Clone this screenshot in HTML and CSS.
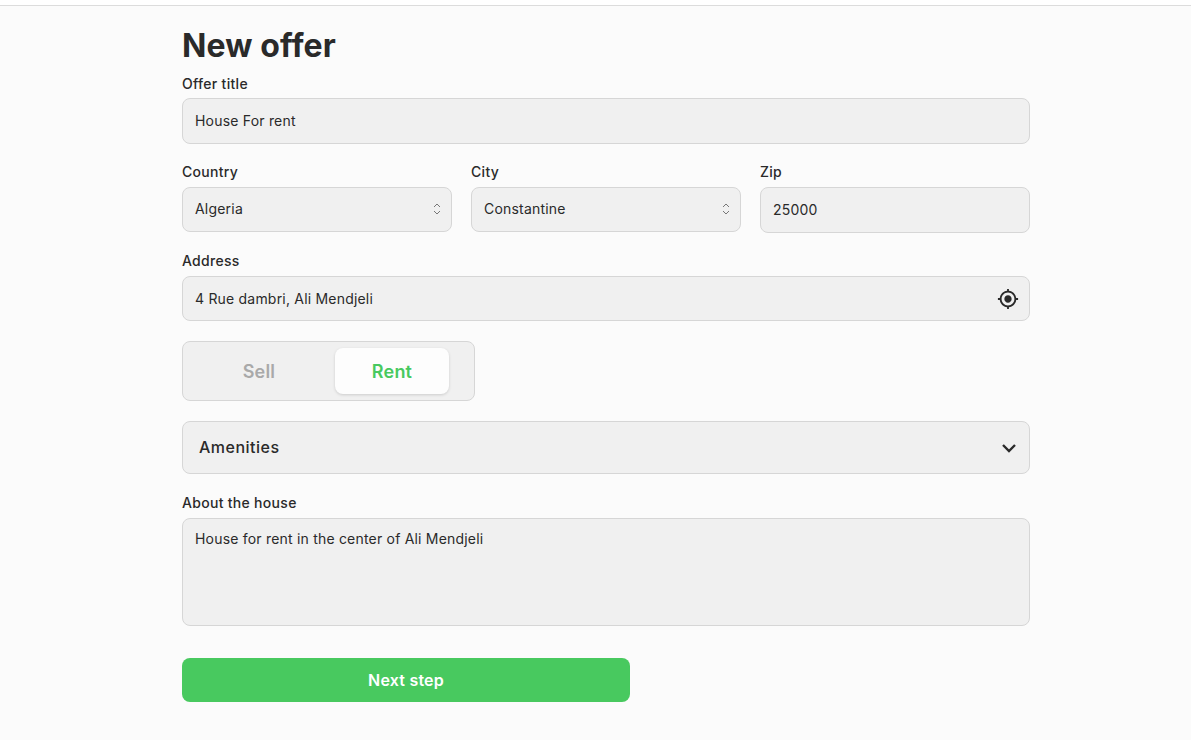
FILE: index.html
```html
<!DOCTYPE html>
<html lang="en">
<head>
    <meta charset="UTF-8">
    <meta name="viewport" content="width=device-width, initial-scale=1.0">
    <title>New offer</title>
    <link rel="stylesheet" href="styles.css">
</head>
<body>

    <div class="topbar"></div>

    <main class="page">
        <h1>New offer</h1>
        <form class="offer-form">
            <div class="field">
                <label for="title">Offer title</label>
                <input type="text" id="title" value="House For rent">
            </div>

            <div class="row">
                <div class="field">
                    <label for="country" class="raised">Country</label>
                    <div class="select-wrap">
                        <select id="country"><option>Algeria</option></select>
                        <svg class="updown" viewBox="0 0 8 12"><path d="M1 4l3-3 3 3M1 8l3 3 3-3"/></svg>
                    </div>
                </div>
                <div class="field">
                    <label for="city" class="raised">City</label>
                    <div class="select-wrap">
                        <select id="city"><option>Constantine</option></select>
                        <svg class="updown" viewBox="0 0 8 12"><path d="M1 4l3-3 3 3M1 8l3 3 3-3"/></svg>
                    </div>
                </div>
                <div class="field">
                    <label for="zip" class="raised">Zip</label>
                    <input type="text" id="zip" value="25000">
                </div>
            </div>

            <div class="field">
                <label for="address" class="raised">Address</label>
                <div class="select-wrap">
                    <input type="text" id="address" class="short" value="4 Rue dambri, Ali Mendjeli">
                    <svg class="locate" viewBox="0 0 24 24"><path d="M12 8c-2.21 0-4 1.79-4 4s1.79 4 4 4 4-1.79 4-4-1.79-4-4-4zm8.94 3c-.46-4.17-3.77-7.48-7.94-7.94V1h-2v2.06C6.83 3.52 3.52 6.83 3.06 11H1v2h2.06c.46 4.17 3.77 7.48 7.94 7.94V23h2v-2.06c4.17-.46 7.48-3.77 7.94-7.94H23v-2h-2.06zM12 19c-3.87 0-7-3.13-7-7s3.13-7 7-7 7 3.13 7 7-3.13 7-7 7z"/></svg>
                </div>
            </div>

            <div class="toggle">
                <button type="button" class="toggle-btn">Sell</button>
                <button type="button" class="toggle-btn active">Rent</button>
            </div>

            <div class="accordion">
                <span>Amenities</span>
                <svg class="chevron" viewBox="0 0 16 10"><path d="M2 2l6 6 6-6"/></svg>
            </div>

            <div class="field">
                <label for="about" class="about-label">About the house</label>
                <textarea id="about">House for rent in the center of Ali Mendjeli</textarea>
            </div>

            <button type="submit" class="next-btn">Next step</button>
        </form>
    </main>

</body>
</html>
```

FILE: styles.css
```css
body {
    margin: 0;
    background-color: #fbfbfb;
    color: #2a2a2a;
    font-family: Inter, "Open Sans", sans-serif;
}
.topbar {
    height: 5px;
    background-color: #fff;
    border-bottom: 1px solid #dcdcdc;
}
.page {
    width: 848px;
    margin-left: 182px;
}
h1 {
    margin: 0;
    padding-top: 16px;
    font-size: 32px;
    line-height: 48px;
    font-weight: 700;
    letter-spacing: 0.1px;
    height: 52px;
}
.offer-form {
    display: flex;
    flex-direction: column;
}
.field {
    display: flex;
    flex-direction: column;
    margin-bottom: 19px;
}
label {
    font-size: 14px;
    line-height: 19px;
    font-weight: 500;
    letter-spacing: 0.3px;
    margin-bottom: 5px;
}
.raised {
    line-height: 17px;
    margin-bottom: 7px;
}
.about-label {
    margin-bottom: 6px;
}
input, select, textarea {
    box-sizing: border-box;
    width: 100%;
    height: 46px;
    padding: 0 12px 2px;
    background-color: #f0f0f0;
    border: 1px solid #d6d6d6;
    border-radius: 8px;
    color: #2a2a2a;
    font-family: inherit;
    font-size: 14px;
    letter-spacing: 0.2px;
    appearance: none;
}
select {
    height: 45px;
}
.short {
    height: 45px;
    padding-bottom: 0;
}
textarea {
    height: 108px;
    padding: 10px 12px;
    line-height: 20px;
    resize: none;
    display: block;
}
.row {
    display: grid;
    grid-template-columns: repeat(3, 270px);
    column-gap: 19px;
}
.select-wrap {
    position: relative;
}
.updown {
    position: absolute;
    right: 11px;
    top: 16px;
    width: 8px;
    height: 12px;
    fill: none;
    stroke: #777;
    stroke-width: 1;
}
.locate {
    position: absolute;
    right: 11px;
    top: 12px;
    width: 22px;
    height: 22px;
    fill: #2a2a2a;
}
.toggle {
    box-sizing: border-box;
    display: flex;
    gap: 19px;
    width: 293px;
    height: 60px;
    margin-top: 1px;
    padding: 6px 25px 6px 19px;
    background-color: #f0f0f0;
    border: 1px solid #d6d6d6;
    border-radius: 8px;
}
.toggle-btn {
    width: 114px;
    border: none;
    border-radius: 8px;
    background: none;
    color: #a9a9a9;
    font-family: inherit;
    font-size: 18px;
    font-weight: 600;
    letter-spacing: 0.2px;
}
.toggle-btn.active {
    background-color: #fdfdfd;
    color: #48c95f;
    box-shadow: 0 1px 3px rgba(0, 0, 0, 0.15);
}
.accordion {
    box-sizing: border-box;
    display: flex;
    align-items: center;
    justify-content: space-between;
    height: 53px;
    margin: 20px 0 19px;
    padding: 0 12px 2px 16px;
    background-color: #f0f0f0;
    border: 1px solid #d6d6d6;
    border-radius: 8px;
    font-size: 16px;
    font-weight: 500;
    letter-spacing: 0.5px;
}
.chevron {
    width: 16px;
    height: 10px;
    margin-top: 2px;
    fill: none;
    stroke: #2a2a2a;
    stroke-width: 2.4;
}
.next-btn {
    width: 448px;
    height: 44px;
    margin-top: 13px;
    padding-bottom: 2px;
    background-color: #48c95f;
    color: #fff;
    border: none;
    border-radius: 8px;
    font-family: inherit;
    font-size: 16px;
    font-weight: 600;
    letter-spacing: 0.2px;
}
```
